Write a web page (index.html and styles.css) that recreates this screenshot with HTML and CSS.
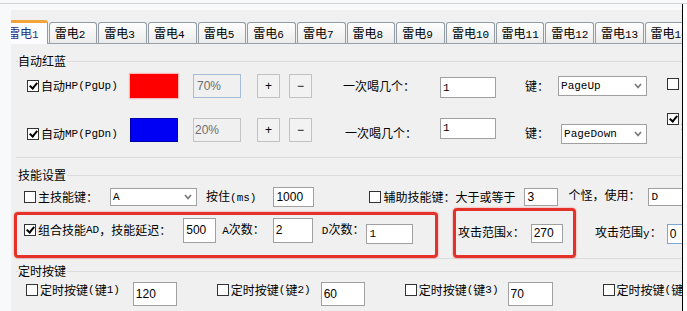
FILE: index.html
```html
<!DOCTYPE html>
<html lang="zh-CN">
<head>
  <meta charset="UTF-8">
  <title>雷电设置</title>
  <link rel="stylesheet" href="styles.css">
</head>
<body>
<div class="screen">
  <div class="rule"></div>
  <div class="frame">
    <div class="strip"></div>
    <div class="main">
      <div class="tabbar">
        <div class="tab active">雷电<span class="en">1</span></div>
        <div class="tab">雷电<span class="en">2</span></div>
        <div class="tab">雷电<span class="en">3</span></div>
        <div class="tab">雷电<span class="en">4</span></div>
        <div class="tab">雷电<span class="en">5</span></div>
        <div class="tab">雷电<span class="en">6</span></div>
        <div class="tab">雷电<span class="en">7</span></div>
        <div class="tab">雷电<span class="en">8</span></div>
        <div class="tab">雷电<span class="en">9</span></div>
        <div class="tab">雷电<span class="en">10</span></div>
        <div class="tab">雷电<span class="en">11</span></div>
        <div class="tab">雷电<span class="en">12</span></div>
        <div class="tab">雷电<span class="en">13</span></div>
        <div class="tab">雷电<span class="en">14</span></div>
      </div>

      <div class="page">
        <!-- 自动红蓝 -->
        <section class="group potion-group">
          <h2 class="legend"><span>自动红蓝</span></h2>
          <div class="potion">
            <div class="potion-rows">
              <div class="row">
                <label class="check potion-check"><span class="cb on"></span>自动<span class="en">HP(PgUp)</span></label>
                <span class="swatch red"></span>
                <input class="box pct" value="70%" readonly>
                <button class="btn plus">+</button>
                <button class="btn minus">−</button>
                <span class="ask">一次喝几个：</span>
                <input class="box mono count" value="1">
                <span class="key">键：</span>
                <div class="select key-select"><span class="en">PageUp</span><svg class="arrow" width="8" height="6" viewBox="0 0 8 6"><polyline points="1,1 4,4.5 7,1" /></svg></div>
              </div>
              <div class="row mp">
                <label class="check potion-check"><span class="cb on"></span>自动<span class="en">MP(PgDn)</span></label>
                <span class="swatch blue"></span>
                <input class="box pct" value="20%" readonly>
                <button class="btn plus">+</button>
                <button class="btn minus">−</button>
                <span class="ask">一次喝几个：</span>
                <input class="box mono count" value="1">
                <span class="key">键：</span>
                <div class="select key-select"><span class="en">PageDown</span><svg class="arrow" width="8" height="6" viewBox="0 0 8 6"><polyline points="1,1 4,4.5 7,1" /></svg></div>
              </div>
            </div>
            <div class="side-checks">
              <span class="cb"></span>
              <label class="check"><span class="cb on"></span>自动</label>
            </div>
          </div>
        </section>

        <!-- 技能设置 -->
        <section class="group skill-group">
          <h2 class="legend"><span>技能设置</span></h2>
          <div class="row skill-row">
            <label class="check main-check"><span class="cb"></span>主技能键：</label>
            <div class="select main-select"><span class="en">A</span><svg class="arrow" width="8" height="6" viewBox="0 0 8 6"><polyline points="1,1 4,4.5 7,1" /></svg></div>
            <span class="hold">按住<span class="en">(ms)</span></span>
            <input class="box hold-ms" value="1000">
            <label class="check aux-check"><span class="cb"></span>辅助技能键：大于或等于</label>
            <input class="box aux-count" value="3">
            <span class="use">个怪，使用：</span>
            <input class="box mono aux-key" value="D">
          </div>
          <div class="row mark-row">
            <div class="mark combo">
              <label class="check"><span class="cb on"></span>组合技能<span class="en">AD</span>，技能延迟：</label>
              <input class="box delay" value="500">
              <span class="times-a"><span class="en">A</span>次数：</span>
              <input class="box a-count" value="2">
              <span class="times-d"><span class="en">D</span>次数：</span>
              <input class="box mono d-count" value="1">
            </div>
            <div class="mark range">
              <span>攻击范围<span class="en">x</span>：</span>
              <input class="box range-x" value="270">
            </div>
            <span class="range-y-label">攻击范围<span class="en">y</span>：</span>
            <input class="box range-y" value="0">
          </div>
        </section>

        <!-- 定时按键 -->
        <section class="group timer-group">
          <h2 class="legend"><span>定时按键</span></h2>
          <div class="row timer-row">
            <label class="check t1"><span class="cb"></span>定时按键<span class="en">(</span>键<span class="en">1)</span></label>
            <input class="box t-val v1" value="120">
            <label class="check t2"><span class="cb"></span>定时按键<span class="en">(</span>键<span class="en">2)</span></label>
            <input class="box t-val v2" value="60">
            <label class="check t3"><span class="cb"></span>定时按键<span class="en">(</span>键<span class="en">3)</span></label>
            <input class="box t-val v3" value="70">
            <label class="check t4"><span class="cb"></span>定时按键<span class="en">(</span>键<span class="en">4)</span></label>
          </div>
        </section>
      </div>
    </div>
    <div class="edge"></div>
  </div>
</div>
</body>
</html>
```

FILE: styles.css
```css
body {
  margin: 0;
  font-family: "Noto Sans CJK SC", "Noto Sans", sans-serif;
  font-size: 12px;
  line-height: 14px;
  color: #000;
}
.screen {
  width: 687px;
  height: 311px;
  overflow: hidden;
  background: #f8f9fb;
}
.rule {
  height: 1px;
  margin-top: 3px;
  background: #cfd4da;
}
.frame {
  display: flex;
  height: 307px;
}
.strip {
  width: 11px;
  flex: none;
}
.main {
  width: 671px;
  flex: none;
  border-right: 1px solid #000;
  overflow: hidden;
  padding-top: 6px;
  display: flex;
  flex-direction: column;
}
.edge {
  flex: 1;
  background: #fff;
}
.en {
  font-family: "Liberation Mono", monospace;
  font-size: 11px;
}

/* tabs */
.tabbar {
  height: 33px;
  flex: none;
  background: #f0f0f0;
  border-bottom: 1px solid #9aa2a8;
  display: flex;
  align-items: flex-end;
}
.tab {
  flex: none;
  box-sizing: border-box;
  width: 48.67px;
  height: 21px;
  margin-right: 1px;
  padding-left: 5px;
  border: 1px solid #949ca3;
  border-bottom: 0;
  border-radius: 3px 3px 0 0;
  background: linear-gradient(#fefefe, #ebebeb);
  line-height: 20px;
  white-space: nowrap;
  overflow: hidden;
}
.tab.active {
  height: 24px;
  margin-left: -12px;
  margin-bottom: -1px;
  padding-left: 8px;
  border-top: 3px solid #f2a33a;
  background: #fcfcfe;
  color: #1d2f7d;
}

/* page + group boxes */
.page {
  flex: 1;
  background: #f0f0f0;
  padding: 10px 0 0 5px;
}
.group {
  border-bottom: 1px solid #dcdcdc;
}
.legend {
  display: flex;
  align-items: center;
  height: 14px;
  margin: 0;
  font-size: 12px;
  font-weight: normal;
  white-space: nowrap;
}
.legend::before {
  content: "";
  width: 2px;
  border-top: 1px solid #dcdcdc;
}
.legend::after {
  content: "";
  flex: 1;
  margin-left: 1px;
  border-top: 1px solid #dcdcdc;
}
.skill-group, .timer-group {
  margin-top: 10px;
}
.timer-group {
  margin-top: 5px;
  border-bottom: 0;
}

.row {
  display: flex;
  align-items: center;
  white-space: nowrap;
}
.check {
  display: flex;
  align-items: center;
  flex: none;
}
.cb {
  position: relative;
  box-sizing: border-box;
  width: 12px;
  height: 12px;
  margin-right: 2px;
  flex: none;
  border: 1px solid #333;
  background: #fff;
}
.cb.on::after {
  content: "";
  position: absolute;
  left: 3px;
  top: 0;
  width: 3px;
  height: 6px;
  border: solid #000;
  border-width: 0 2px 2px 0;
  transform: rotate(40deg);
}
.box {
  box-sizing: border-box;
  flex: none;
  height: 20px;
  margin: 0;
  padding: 0 2px;
  border: 1px solid #a0a0a0;
  background: #fff;
  font: 12px "Liberation Sans", sans-serif;
  color: #000;
  outline: none;
}
.box.mono {
  font-family: "Liberation Mono", monospace;
  font-size: 11px;
}
.select {
  box-sizing: border-box;
  flex: none;
  display: flex;
  align-items: center;
  justify-content: space-between;
  height: 20px;
  padding: 0 4px 0 2px;
  border: 1px solid #a0a0a0;
  background: #fff;
}
.arrow polyline {
  fill: none;
  stroke: #7a7a7a;
  stroke-width: 1.7;
}

/* 自动红蓝 */
.potion {
  display: flex;
  margin-top: 6px;
  padding-bottom: 15px;
}
.potion-rows {
  display: flex;
  flex-direction: column;
  gap: 20px;
}
.potion .row {
  height: 24px;
}
.potion-check {
  width: 103px;
  margin-left: 11px;
}
.swatch {
  width: 48px;
  height: 24px;
  flex: none;
}
.swatch.red {
  background: #ff0000;
  box-shadow: 0 0 1px 1px rgba(255, 120, 120, 0.45);
}
.swatch.blue {
  background: #0000f5;
  box-shadow: inset 0 0 0 1px #0000a8;
}
.pct {
  width: 48px;
  height: 24px;
  margin-left: 15px;
  padding: 0 3px;
  background: #f0f0f0;
  border-color: #a7bdd6;
  color: #6d6d6d;
}
.btn {
  box-sizing: border-box;
  flex: none;
  width: 23px;
  height: 24px;
  padding: 0;
  border: 1px solid #c2c2c2;
  background: #f2f2f2;
  font: 12px "Liberation Sans", sans-serif;
  color: #000;
}
.plus { margin-left: 16px; }
.minus { margin-left: 9px; }
.ask { margin-left: 31px; }
.count {
  width: 56px;
  height: 21px;
  margin-left: 25px;
  margin-top: 3px;
}
.key { margin-left: 29px; }
.key-select {
  width: 89px;
  margin-left: 9px;
}
.mp .potion-check { margin-top: 8px; }
.mp .pct {
  padding-left: 1px;
  border-color: #c4c4c4;
}
.mp .ask {
  margin-top: 6px;
  margin-left: 33px;
}
.mp .count {
  margin-top: -4px;
  margin-left: 23px;
}
.mp .key { margin-top: 6px; }
.mp .key-select {
  width: 86px;
  margin-left: 12px;
  margin-top: 8px;
}
.side-checks {
  display: flex;
  flex-direction: column;
  gap: 15px;
  margin-left: 20px;
  padding-top: 4px;
}

/* 技能设置 */
.skill-row {
  height: 20px;
  margin-top: 5px;
}
.main-check { margin-left: 8px; }
.main-select {
  width: 87px;
  height: 18px;
  margin-left: 12px;
}
.hold { margin-left: 9px; }
.hold-ms {
  width: 41px;
  margin-left: 17px;
}
.aux-check { margin-left: 55px; }
.aux-count {
  width: 34px;
  height: 18px;
  margin-left: 9px;
}
.use {
  margin-left: 10px;
  margin-bottom: 4px;
}
.aux-key {
  width: 60px;
  height: 18px;
  margin-left: 8px;
}

.mark-row {
  height: 50px;
  margin-top: 1px;
  align-items: flex-end;
}
.mark {
  box-sizing: border-box;
  flex: none;
  display: flex;
  align-items: center;
  border: 3px solid #e4322b;
  border-radius: 4px;
  box-shadow: 0 0 2px rgba(228, 50, 43, 0.6);
}
.combo {
  width: 424px;
  height: 46px;
  margin-left: -2px;
  padding: 0 0 10px 7px;
}
.delay {
  width: 33px;
  height: 25px;
  margin-left: 12px;
}
.times-a { margin-left: 6px; }
.a-count {
  width: 40px;
  height: 25px;
  margin-left: 8px;
}
.times-d { margin-left: 9px; }
.d-count {
  width: 47px;
  margin-left: 2px;
  margin-top: 8px;
}
.range {
  width: 123px;
  height: 50px;
  margin-left: 15px;
  padding-left: 2px;
}
.range-x {
  width: 32px;
  height: 19px;
  margin-left: 6px;
}
.range-y-label {
  align-self: center;
  margin-left: 19px;
}
.range-y {
  align-self: center;
  width: 40px;
  margin-left: 5px;
  margin-top: 2px;
  border-color: #7aa7d6;
}

/* 定时按键 */
.timer-row {
  align-items: flex-start;
  margin-top: 4px;
}
.timer-row .check { margin-top: 1px; }
.t1 { margin-left: 10px; }
.t2, .t3 { margin-left: 40px; }
.t4 { margin-left: 50px; }
.t-val {
  width: 44px;
  height: 24px;
}
.v1 { margin-left: 13px; }
.v2 { margin-left: 10px; }
.v3 {
  width: 45px;
  margin-left: 9px;
}
```
